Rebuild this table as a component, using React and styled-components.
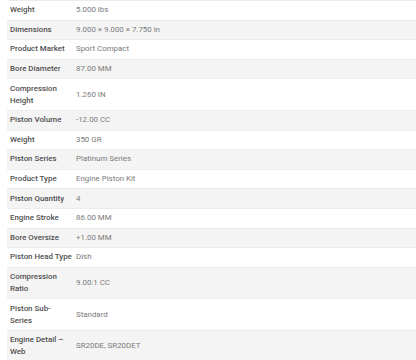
import React from "react";
import styled, { createGlobalStyle } from "styled-components";

const GlobalStyle = createGlobalStyle`
  html, body {
    margin: 0;
    padding: 0;
    background: #ffffff;
  }
  body {
    font-family: Roboto, "Noto Sans", "Liberation Sans", sans-serif;
    overflow: hidden;
  }
`;

const Page = styled.div`
  padding-left: 7px;
  width: 409px;
`;

const SpecTable = styled.table`
  width: 100%;
  border-collapse: collapse;
  table-layout: fixed;
  border-top: 1px solid #ececec;
  font-size: 7.9px;
  line-height: 12px;
`;

const Row = styled.tr`
  background: ${(props) => (props.$striped ? "#f4f4f4" : "#ffffff")};
  border-bottom: 1px solid #ececec;
`;

const Label = styled.th`
  padding: 3.3px 1px 3.3px 3px;
  text-align: left;
  vertical-align: middle;
  font-weight: 500;
  color: #505050;
`;

const Value = styled.td`
  padding: 3.3px 3px;
  vertical-align: middle;
  font-weight: 400;
  color: #7a7a7a;
`;

const specs = [
  ["Weight", "5.000 lbs"],
  ["Dimensions", "9.000 × 9.000 × 7.750 in"],
  ["Product Market", "Sport Compact"],
  ["Bore Diameter", "87.00 MM"],
  ["Compression Height", "1.260 IN"],
  ["Piston Volume", "-12.00 CC"],
  ["Weight", "350 GR"],
  ["Piston Series", "Platinum Series"],
  ["Product Type", "Engine Piston Kit"],
  ["Piston Quantity", "4"],
  ["Engine Stroke", "86.00 MM"],
  ["Bore Oversize", "+1.00 MM"],
  ["Piston Head Type", "Dish"],
  ["Compression Ratio", "9.00:1 CC"],
  ["Piston Sub-Series", "Standard"],
  ["Engine Detail – Web", "SR20DE, SR20DET"],
];

export default function App() {
  return (
    <>
      <GlobalStyle />
      <Page>
        <SpecTable>
          <colgroup>
            <col style={{ width: "66px" }} />
            <col />
          </colgroup>
          <tbody>
            {specs.map(([label, value], i) => (
              <Row key={i} $striped={i % 2 === 1}>
                <Label>{label}</Label>
                <Value>{value}</Value>
              </Row>
            ))}
          </tbody>
        </SpecTable>
      </Page>
    </>
  );
}
